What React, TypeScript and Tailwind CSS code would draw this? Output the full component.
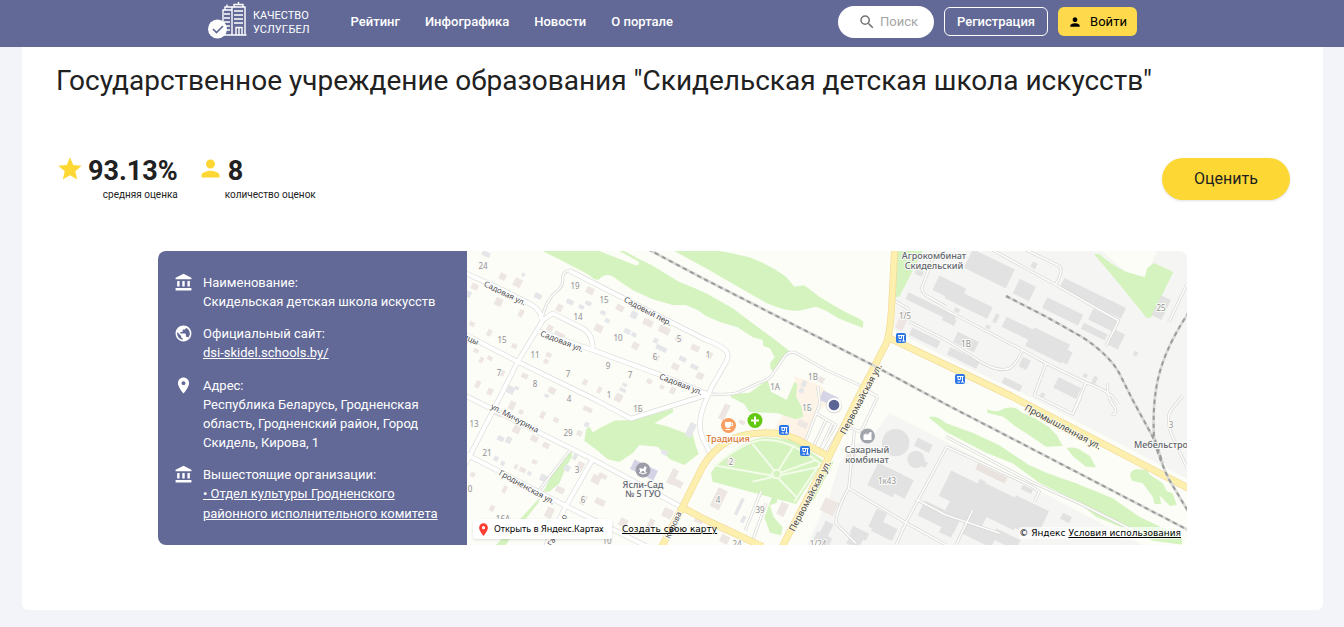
import type { ReactNode } from "react";
import { MdAccountBalance, MdPerson, MdPlace, MdPublic, MdSearch, MdStar } from "react-icons/md";

type Box = [number, number, number, number];
type Label = { x: number; y: number; text: string; turn?: number };

const navItems = ["Рейтинг", "Инфографика", "Новости", "О портале"];

/* Houses of the residential quarter: centre x, centre y, width, height */
const houses: Box[] = [
  [110, 80, 20, 20], [155, 98, 24, 26], [26, 110, 20, 18], [98, 156, 22, 24], [165, 190, 14, 22],
  [18, 222, 16, 14], [70, 248, 14, 20], [145, 288, 16, 14], [252, 235, 18, 18], [280, 255, 32, 16],
  [280, 174, 18, 22], [372, 122, 24, 20], [462, 174, 24, 18], [398, 235, 24, 22], [508, 288, 20, 20],
  [546, 218, 30, 20], [595, 240, 34, 22], [638, 267, 20, 18], [688, 294, 26, 18], [570, 322, 20, 18],
  [628, 350, 22, 18], [702, 378, 22, 20], [730, 315, 18, 18], [30, 302, 16, 12], [46, 330, 12, 18],
  [72, 325, 16, 12], [35, 403, 14, 22], [72, 425, 16, 20], [176, 378, 20, 14], [248, 315, 16, 14],
  [240, 334, 14, 14], [258, 422, 22, 18], [357, 397, 14, 18], [400, 420, 12, 20], [460, 440, 20, 16],
  [550, 394, 16, 14], [588, 411, 14, 12], [620, 422, 16, 20], [110, 370, 10, 18], [456, 446, 22, 18],
  [138, 467, 18, 26], [165, 486, 14, 14], [98, 490, 20, 20], [152, 538, 22, 24], [230, 495, 14, 22],
  [270, 510, 16, 14], [205, 566, 22, 18], [240, 586, 20, 16], [365, 478, 28, 14], [518, 476, 20, 20],
  [340, 550, 16, 16], [150, 650, 10, 14], [170, 660, 20, 14], [206, 636, 16, 12], [20, 674, 14, 14],
  [116, 718, 12, 22], [78, 775, 14, 18], [282, 720, 26, 18], [342, 650, 20, 30], [390, 688, 26, 26],
  [410, 678, 26, 14], [402, 756, 30, 18], [352, 750, 16, 30], [250, 788, 22, 32], [605, 790, 30, 28],
  [620, 680, 20, 48], [635, 700, 30, 20], [472, 818, 24, 24], [700, 808, 26, 24], [555, 820, 16, 26],
  [758, 746, 30, 62], [795, 634, 24, 20], [1010, 522, 30, 18], [775, 486, 18, 50], [828, 517, 18, 12],
  [950, 778, 24, 40], [776, 868, 26, 24], [1066, 390, 18, 18], [1090, 770, 44, 42], [1310, 212, 24, 58],
  [1155, 616, 26, 20],
];

const sheds: Box[] = [
  [60, 12, 26, 14], [172, 74, 10, 10], [216, 138, 22, 16], [8, 133, 14, 18], [312, 156, 22, 14],
  [346, 171, 16, 12], [367, 160, 18, 12], [411, 188, 16, 12], [424, 212, 14, 12], [504, 195, 20, 20],
  [484, 244, 20, 14], [504, 254, 16, 12], [569, 272, 14, 14], [586, 295, 34, 14], [650, 327, 22, 14],
  [685, 351, 24, 14], [134, 420, 22, 22], [152, 414, 14, 10], [242, 437, 14, 10], [476, 404, 14, 10],
  [470, 420, 20, 10], [104, 566, 20, 14], [128, 570, 16, 20], [90, 626, 14, 14], [110, 640, 12, 14],
  [190, 670, 12, 12], [232, 684, 20, 20], [303, 655, 18, 18], [327, 621, 12, 18], [362, 524, 14, 14],
  [596, 608, 20, 14], [674, 540, 20, 44], [820, 770, 10, 54], [832, 808, 12, 22],
  [1014, 402, 14, 20], [1006, 422, 14, 14],
];

const industry: Box[] = [
  [1570, 56, 140, 62], [1675, 120, 54, 48], [1508, 158, 142, 38], [1395, 172, 160, 22], [1450, 118, 90, 48],
  [1360, 68, 24, 18], [1704, 46, 16, 18], [1880, 145, 206, 36], [1790, 184, 120, 36], [1910, 210, 80, 36],
  [1885, 245, 80, 20], [1950, 268, 36, 50], [1655, 235, 90, 34], [1745, 286, 120, 62], [1780, 310, 70, 40],
  [1590, 205, 12, 28], [1473, 181, 16, 12], [1566, 231, 14, 10], [1376, 264, 94, 24], [1500, 276, 70, 34],
  [1492, 324, 98, 24], [1450, 210, 40, 20], [1676, 340, 26, 32], [1638, 403, 60, 20], [1804, 414, 76, 36],
  [1858, 377, 12, 12], [1886, 390, 12, 22], [1730, 435, 12, 12], [2009, 311, 12, 14], [2086, 173, 32, 66],
  [1372, 586, 50, 26], [1374, 642, 18, 18], [1258, 690, 84, 74], [1292, 700, 84, 62], [1235, 810, 34, 60],
  [1255, 840, 70, 40], [1170, 866, 40, 50], [1080, 840, 26, 50], [1070, 868, 50, 30], [1420, 800, 120, 50],
  [1500, 730, 140, 84], [1600, 770, 140, 90], [1680, 800, 110, 90], [1500, 790, 120, 56], [1448, 832, 40, 50],
  [1540, 850, 100, 46], [1620, 868, 80, 34], [1683, 718, 34, 14], [1800, 804, 30, 20], [1546, 700, 20, 20],
  [1606, 740, 20, 20], [1180, 850, 54, 24],
];

const greens = [
  "M230 3L300 38L370 75Q395 100 405 82Q425 66 450 86L500 120L560 148L620 165L660 165L695 180L720 198L760 215L815 232L860 262L890 270L892 288L912 295L926 322L912 340L914 358L926 365L970 303L935 275L880 235L800 175L720 130L680 112L640 96L560 47L515 25L475 3L460 3L518 35Q522 48 508 46L400 3Z",
  "M625 3L720 55L790 95L850 130L900 158Q970 190 1010 180L1050 170L1080 182L1120 206L1160 222L1190 234L1192 215L1178 205L1145 190L1110 170L1060 140L1015 106L985 110L960 80L930 60L890 38L850 22L790 8L760 3Z",
  "M1295 3H1370L1300 140L1285 142Z",
  "M1884 12L1900 12Q1940 48 1980 65L2036 82L2044 54L2064 39L2122 66L2055 203L2042 204L1950 90Z",
  "M795 432L850 428L905 390L915 425L962 450L985 396L994 402L990 440L1006 470L1012 500L990 508L935 490L850 486L835 462L795 442Z",
  "M355 572L360 538L372 530L380 548L400 535L445 512L500 510L620 476L622 486L565 520L600 528L655 548L680 552L690 590L698 612L655 645L612 628L575 590L520 585L500 610L460 636L425 628L395 602Z",
  "M250 690L290 622L318 607L318 620L300 650L280 700L250 725L232 724Z",
  "M210 755L224 742L216 760L118 885H90L160 810Z",
  "M735 668L755 640Q840 565 900 561L980 570L1070 630L1062 650L990 762L740 695Z",
  "M895 802L918 742L935 740L932 758L912 766L922 800L950 832L945 856L912 848Z",
  "M1388 502Q1410 492 1440 520L1520 548L1600 586L1690 646L1745 670L1830 700L1940 745L2020 800L2145 860L2150 884L2062 872L1980 838L1890 800L1830 752L1720 698L1640 640L1560 608L1440 545Z",
  "M1564 478Q1595 490 1612 476Q1650 466 1668 488L1706 505L1750 532L1772 555L1790 588L1740 590L1690 556L1650 530L1612 500L1564 488Z",
  "M1802 594Q1830 588 1850 605L1872 618L1890 652L1860 650L1820 618Z",
  "M1992 676Q1996 655 2018 658L2042 660L2052 674L2090 700L2102 724L2120 730L2132 764L2112 768L2080 736L2086 762L2066 762L2060 740L2030 700L1998 692Z",
];

const streets = [
  "M0 70L110 120L185 158Q228 178 228 215L155 335L95 455L10 620L-10 655",
  "M228 212L260 190L350 235Q382 254 380 300",
  "M310 62L720 270Q765 285 782 305Q790 320 778 340L735 415L725 440Q690 510 708 560L735 615",
  "M215 243L380 300L570 370L725 432",
  "M0 255L155 335L390 450L495 506L725 434",
  "M0 438L380 628L650 773",
  "M0 613L300 768L540 888",
  "M380 628L300 768L240 888",
];

const lanes = [
  "M228 205Q240 150 270 125Q295 108 290 80Q294 62 312 62",
  "M725 432Q790 436 815 428L880 398Q910 390 920 372L955 320Q970 300 992 310L1080 360L1180 405L1235 440",
  "M315 598L220 720", "M1285 152L1325 175L1330 192", "M1330 215L1440 270L1520 320Q1590 370 1630 355Q1650 345 1670 300",
  "M1440 180L1670 300L1740 340L1860 398Q1940 425 1955 462", "M1740 340L1705 435L1820 492L1845 440",
  "M1860 398L1820 492", "M1580 0L1770 105L1958 212L1920 288", "M1680 0L1780 48Q1795 60 1768 105",
  "M1410 0L1368 112Q1365 130 1395 145L1440 170", "M2164 100L2108 218", "M1235 440L1190 535Q1180 550 1165 538L1125 522",
  "M1235 440L1205 425", "M1165 545L1160 600L1148 715Q1110 780 1110 820L1170 880", "M1148 715L1320 818L1440 885",
  "M1442 590L1320 818L1290 885", "M1350 748L1440 795L1600 850", "M1442 590L1700 710L1720 725L1705 755",
  "M1440 560L1705 700L1840 760L2020 850", "M1520 780L1470 885", "M1055 410L1062 460L1020 570M1050 490L1110 525L1060 610",
  "M1080 510L1040 595", "M1100 520L1060 606", "M1130 525L1080 612", "M885 725L838 840M900 760L860 870",
  "M2164 655L2115 550Q2100 500 2115 480L2150 438M1925 400Q1920 440 1948 475Q1950 502 1935 490",
];

const rails = [
  "M545 -3L720 90L1220 345L1440 463L1720 608L2170 842",
  "M1620 138L1740 200L1850 262Q1930 315 1960 370L2000 450L2060 560Q2085 640 2110 690L2170 790",
  "M2170 185Q2085 310 2070 420Q2060 480 2064 560L2090 640",
];

const highways = [
  "M1286 -3L1278 150Q1274 240 1262 278L1222 355L1170 455L1090 618L948 892",
  "M586 892L650 770L710 650Q770 550 890 549Q960 545 1020 583L1090 620",
  "M650 773L720 810L890 890",
  "M1266 262L1440 345L1635 438L2170 716",
];

const streetLabels: Label[] = [
  { x: 505, y: 296, text: "Садовая ул.", turn: 26 },
  { x: 648, y: 314, text: "Садовый пер.", turn: 28 },
  { x: 562, y: 344, text: "Садовая ул.", turn: 21 },
  { x: 681, y: 387, text: "Садовая ул.", turn: 21 },
  { x: 471, y: 342, text: "ицы", turn: 25 },
  { x: 515, y: 421, text: "ул. Мичурина", turn: 28 },
  { x: 527, y: 490, text: "Гродненская ул.", turn: 29 },
  { x: 673, y: 528, text: "Кирова", turn: -65 },
  { x: 557, y: 533, text: "Гастелло", turn: -64 },
];

const avenueLabels: Label[] = [
  { x: 861, y: 402, text: "Первомайская ул.", turn: -62 },
  { x: 810, y: 499, text: "Первомайская ул.", turn: -62 },
  { x: 1063, y: 430, text: "Промышленная ул.", turn: 28 },
];

const placeLabels: Label[] = [
  { x: 934, y: 259, text: "Агрокомбинат" }, { x: 934, y: 269, text: "Скидельский" },
  { x: 867, y: 453, text: "Сахарный" }, { x: 867, y: 463, text: "комбинат" },
  { x: 643, y: 488, text: "Ясли-Сад" }, { x: 643, y: 497, text: "№ 5 ГУО" },
  { x: 1161, y: 448, text: "Мебельстро" },
];

const houseNumbers: Label[] = [
  { x: 483, y: 269, text: "24" }, { x: 575, y: 289, text: "19" }, { x: 604, y: 303, text: "15" },
  { x: 578, y: 320, text: "14" }, { x: 618, y: 341, text: "10" }, { x: 679, y: 342, text: "5" },
  { x: 655, y: 360, text: "6" }, { x: 502, y: 343, text: "15" }, { x: 535, y: 358, text: "11" },
  { x: 608, y: 369, text: "9" }, { x: 568, y: 377, text: "7" }, { x: 630, y: 378, text: "7" },
  { x: 499, y: 376, text: "7" }, { x: 535, y: 387, text: "8" }, { x: 569, y: 402, text: "4" },
  { x: 609, y: 398, text: "1" }, { x: 708, y: 358, text: "1" }, { x: 638, y: 412, text: "1Б" },
  { x: 474, y: 427, text: "13" }, { x: 568, y: 436, text: "29" }, { x: 487, y: 456, text: "21" },
  { x: 577, y: 473, text: "3" }, { x: 583, y: 503, text: "6" }, { x: 503, y: 522, text: "16А" },
  { x: 470, y: 492, text: "0" }, { x: 607, y: 544, text: "10" }, { x: 775, y: 390, text: "1А" },
  { x: 813, y: 380, text: "1В" }, { x: 807, y: 411, text: "1Б" }, { x: 731, y: 465, text: "2" },
  { x: 718, y: 503, text: "4" }, { x: 760, y: 513, text: "39" }, { x: 905, y: 319, text: "1/5" },
  { x: 966, y: 347, text: "1В" }, { x: 1161, y: 311, text: "25" }, { x: 887, y: 484, text: "1к43" },
  { x: 818, y: 547, text: "1/24" }, { x: 1171, y: 428, text: "3" }, { x: 737, y: 547, text: "24" },
];

const stops: [number, number][] = [[901, 338], [960, 379], [784, 430], [805, 451]];

function Blocks({ boxes, className }: { boxes: Box[]; className: string }) {
  return (
    <g className={className}>
      {boxes.map(([x, y, w, h], i) => (
        <rect key={i} x={x - w / 2} y={y - h / 2} width={w} height={h} transform={`rotate(26 ${x} ${y})`} />
      ))}
    </g>
  );
}

function Lines({ paths, className }: { paths: string[]; className: string }) {
  return (
    <g className={className} fill="none" strokeLinejoin="round">
      {paths.map((d) => <path key={d} d={d} />)}
    </g>
  );
}

function Labels({ items, className }: { items: Label[]; className: string }) {
  return (
    <g className={className} textAnchor="middle" paintOrder="stroke" strokeWidth="2" strokeLinejoin="round">
      {items.map(({ x, y, text, turn = 0 }) => (
        <text key={`${x}-${y}`} x={x} y={y} transform={`rotate(${turn} ${x} ${y - 3})`}>{text}</text>
      ))}
    </g>
  );
}

function CityMap() {
  return (
    <svg
      viewBox="467 251 720 294"
      preserveAspectRatio="xMidYMid slice"
      className="absolute inset-0 size-full bg-[#fbfdf6] font-['Noto_Sans',sans-serif]"
      role="img"
      aria-label="Карта: Скидель, Кирова, 1"
    >
      <g transform="translate(466 250) scale(0.33333)">
        <path className="fill-[#f5f6f3]" d="M1370 0H2170V690L1670 430L1440 322L1285 240L1290 145ZM1270 488L1440 575L2040 890H1020L1090 740L1120 640L1160 590L1230 545Z" />
        <path className="fill-[#fbfdf6]" d="M1905 0H2075L2036 82L1980 65Z" />
        <path className="fill-[#fdf3e6]" d="M985 378L1060 405L1110 450L1060 480L1010 580L925 540L950 495L1012 505L990 440Z" />
        <g className="fill-[#d4f3bf]">{greens.map((d) => <path key={d} d={d} />)}</g>
        <path className="fill-none stroke-[#d4f3bf]" strokeWidth="6" d="M1100 635L1040 750" />
        <g className="fill-none stroke-[#f3fbe9]" strokeWidth="6">
          <circle cx="932" cy="672" r="13" />
          <path d="M740 645L925 678M860 582L925 662M985 585L938 660M1050 630L945 668M1062 650L945 675M936 684L995 745M922 680L860 695M750 645Q850 562 910 570Q980 575 1062 640L985 755" />
        </g>
        <Blocks boxes={houses} className="fill-[#ede6e2]" />
        <Blocks boxes={sheds} className="fill-[#e5e6e9]" />
        <Blocks boxes={industry} className="fill-[#e2e2e2]" />
        <Blocks boxes={[[534, 660, 78, 32], [1088, 446, 50, 30]]} className="fill-[#d5d4e6]" />
        <Blocks boxes={[[1576, 670, 98, 20]]} className="fill-[#e9e2df]" />
        <g className="fill-[#e2e2e2]">
          <circle cx="1289" cy="578" r="41" />
          <circle cx="1350" cy="628" r="26" />
        </g>
        <Lines paths={streets} className="stroke-[#dcdddb] stroke-[16]" />
        <Lines paths={lanes} className="stroke-[#d6d7d5] stroke-[9]" />
        <Lines paths={streets} className="stroke-white stroke-[12]" />
        <Lines paths={lanes} className="stroke-[#fdfdfb] stroke-[5]" />
        <Lines paths={highways} className="stroke-[#f4d999] stroke-[21]" />
        <Lines paths={highways} className="stroke-[#fdf0ae] stroke-[17]" />
        <Lines paths={rails} className="stroke-[#d9dad8] stroke-[8]" />
        <g className="fill-none stroke-[#9b9d9c] stroke-[6]" strokeDasharray="13 11">
          {rails.map((d) => <path key={d} d={d} />)}
        </g>
      </g>
      <Labels items={houseNumbers} className="fill-[#929292] stroke-[#fbfbf8] text-[8px]" />
      <Labels items={streetLabels} className="fill-[#4b4b4b] stroke-white text-[8px]" />
      <Labels items={avenueLabels} className="fill-[#444444] stroke-[#fdf9e4] text-[9px]" />
      <Labels items={placeLabels} className="fill-[#62666e] stroke-[#fbfbf8] text-[9px] font-medium" />
      <Labels items={[{ x: 728, y: 442, text: "Традиция" }]} className="fill-[#d87630] stroke-white text-[9px] font-medium" />
      {stops.map(([x, y]) => (
        <g key={`${x}-${y}`} transform={`translate(${x} ${y})`}>
          <rect x="-5" y="-5" width="10" height="10" rx="2" className="fill-[#2e75e6]" />
          <path d="M-3 -2.5H3.500M-2 -2.5V0.500H0.500V-2M-2.5 3H0M2.500 -2.5V3M1 3H4" className="fill-none stroke-white" />
        </g>
      ))}
      <g transform="translate(728.5 425.5)">
        <circle r="7.5" className="fill-[#f99f63]" />
        <path d="M-3.5 -3.5H2.5V0Q2 2.5 -0.5 2.5Q-3 2.5 -3.5 0Z" className="fill-white" />
        <path d="M2 -2.5H4V0H2M-3 4H2" className="fill-none stroke-white" />
      </g>
      <g transform="translate(755 420.5)">
        <circle r="7.5" className="fill-[#62c810]" />
        <path d="M0 -4V4M-4 0H4" className="stroke-white stroke-2" />
      </g>
      <g transform="translate(867.5 436)">
        <circle r="7.5" className="fill-[#a2a5ac]" />
        <path d="M-4 4V-1L-1 -3V-1L2 -3V-1V-4H4V4Z" className="fill-white" />
      </g>
      <g transform="translate(643 470)">
        <circle r="7.5" className="fill-[#9b9da8]" />
        <path d="M-4 -0.500L-3 -2L0 -1L2 -4L4 -2L3 -1.500L2.500 2.500L1 2.500V1H-1L-1.500 2.500H-3V0Z" className="fill-white" />
        <path d="M-4 2.500Q0 5.500 4 2.500" className="fill-none stroke-white" />
      </g>
      <circle cx="834" cy="405.5" r="8" className="fill-[#bbbbbb]" opacity="0.45" />
      <circle cx="834" cy="405" r="7.3" className="fill-white" />
      <circle cx="834" cy="405" r="5.3" className="fill-[#5d6597]" />
    </svg>
  );
}

function Logo() {
  return (
    <svg viewBox="0 0 40 38" className="h-[38px] w-10 shrink-0" aria-hidden="true">
      <g fill="none" stroke="white" strokeWidth="1.4">
        <path d="M15 33V8H24M17 8V5H24M19 5V2.500M24 33V5H37V33M26 5V2.500H35V5M30.500 2.500V0M13 33H38.500" />
        <path d="M16 12H22M16 16H22M16 20H22M16 24H22M16 28H22M26 9H35M26 13H35M26 17H35M26 21H35M28 33V25.500H34V33M31 25.500V33" />
      </g>
      <circle cx="9.5" cy="27" r="9.5" fill="white" />
      <path d="M5 27L8.500 30.500L15 24" fill="none" stroke="#626997" strokeWidth="1.7" />
    </svg>
  );
}

function Info({ icon, title, children }: { icon: ReactNode; title: string; children: ReactNode }) {
  return (
    <div className="flex gap-2.5">
      <div className="shrink-0 text-[19px]">{icon}</div>
      <div className="min-w-0">
        <dt>{title}</dt>
        <dd>{children}</dd>
      </div>
    </div>
  );
}

export default function App() {
  return (
    <div className="min-h-screen bg-[#f3f4f9] pb-4 font-[Roboto,sans-serif] text-[#212121]">
      <header className="flex h-[47px] items-center bg-[#626997] pr-[207px] pl-[208px] text-[13px] text-white">
        <a href="#" className="flex items-center gap-[5px] pb-1.5 text-[11px] leading-[14px]">
          <Logo />
          <span className="pt-1">КАЧЕСТВО<br />УСЛУГ.БЕЛ</span>
        </a>
        <nav className="ml-[41px] flex gap-[25px] pb-1 font-medium">
          {navItems.map((item) => <a key={item} href="#" className="whitespace-nowrap">{item}</a>)}
        </nav>
        <div className="ml-auto flex items-center gap-2.5 pb-1">
          <label className="flex h-8 w-24 items-center gap-1 rounded-full bg-white pl-5 text-[#757575]">
            <MdSearch className="size-[18px] shrink-0" />
            <input type="text" aria-label="Поиск" placeholder="Поиск" className="w-12 min-w-0 bg-transparent outline-none placeholder:text-[#a5a5a5]" />
          </label>
          <button type="button" className="h-[29px] w-[104px] rounded-md border border-white font-medium">Регистрация</button>
          <button type="button" className="flex h-[29px] w-[79px] items-center justify-center gap-2 rounded-md bg-[#fdd94b] text-black">
            <MdPerson className="size-3.5" />
            Войти
          </button>
        </div>
      </header>

      <main className="mr-[21px] ml-[22px] rounded-b-md bg-white pb-[65px]">
        <h1 className="px-[34px] pt-4 text-[28px] leading-9">
          Государственное учреждение образования "Скидельская детская школа искусств"
        </h1>

        <section className="flex items-start justify-between pt-14 pr-[33px] pl-[34px]">
          <div className="flex gap-[19px]">
            <div>
              <div className="flex gap-1">
                <MdStar className="size-7 text-[#fdd835]" />
                <strong className="text-[27px] leading-8 font-bold">93.13%</strong>
              </div>
              <p className="pt-0.5 text-right text-[10px] leading-3">средняя оценка</p>
            </div>
            <div>
              <div className="flex gap-1">
                <MdPerson className="size-[27px] text-[#fdd835]" />
                <strong className="text-[27px] leading-8 font-bold">8</strong>
              </div>
              <p className="pt-0.5 pl-7 text-[10px] leading-3">количество оценок</p>
            </div>
          </div>
          <button type="button" className="mt-[3px] h-[42px] w-32 rounded-full bg-[#fdd835] text-base shadow">Оценить</button>
        </section>

        <section className="mx-34 mt-[50px] flex overflow-hidden rounded-lg">
          <dl className="flex min-h-[294px] w-[309px] shrink-0 flex-col gap-[13px] bg-[#626997] pt-[22px] pr-6 pb-5 pl-4 text-[13px] leading-[19px] text-white">
            <Info icon={<MdAccountBalance />} title="Наименование:">Скидельская детская школа искусств</Info>
            <Info icon={<MdPublic />} title="Официальный сайт:">
              <a href="https://dsi-skidel.schools.by/" className="block leading-5 underline">dsi-skidel.schools.by/</a>
            </Info>
            <Info icon={<MdPlace />} title="Адрес:">Республика Беларусь, Гродненская область, Гродненский район, Город Скидель, Кирова, 1</Info>
            <Info icon={<MdAccountBalance />} title="Вышестоящие организации:">
              <a href="#" className="block leading-5 underline">• Отдел культуры Гродненского районного исполнительного комитета</a>
            </Info>
          </dl>
          <div className="relative min-w-0 flex-1">
            <CityMap />
            <div className="absolute inset-x-1.5 bottom-1.5 flex items-end justify-between font-['DejaVu_Sans',sans-serif] text-[9px] leading-3 text-black">
              <div className="flex items-center gap-2.5">
                <a href="#" className="flex h-5 w-[139px] items-center gap-[3px] rounded-xs bg-white pl-[3px] font-['Noto_Sans',sans-serif] whitespace-nowrap shadow">
                  <MdPlace className="size-[15px] shrink-0 text-[#fc3f32]" />
                  Открыть в Яндекс.Картах
                </a>
                <a href="#" className="whitespace-nowrap underline">Создать свою карту</a>
              </div>
              <p className="rounded-xs bg-white/70 whitespace-nowrap">
                © Яндекс <a href="#" className="underline">Условия использования</a>
              </p>
            </div>
          </div>
        </section>
      </main>
    </div>
  );
}
